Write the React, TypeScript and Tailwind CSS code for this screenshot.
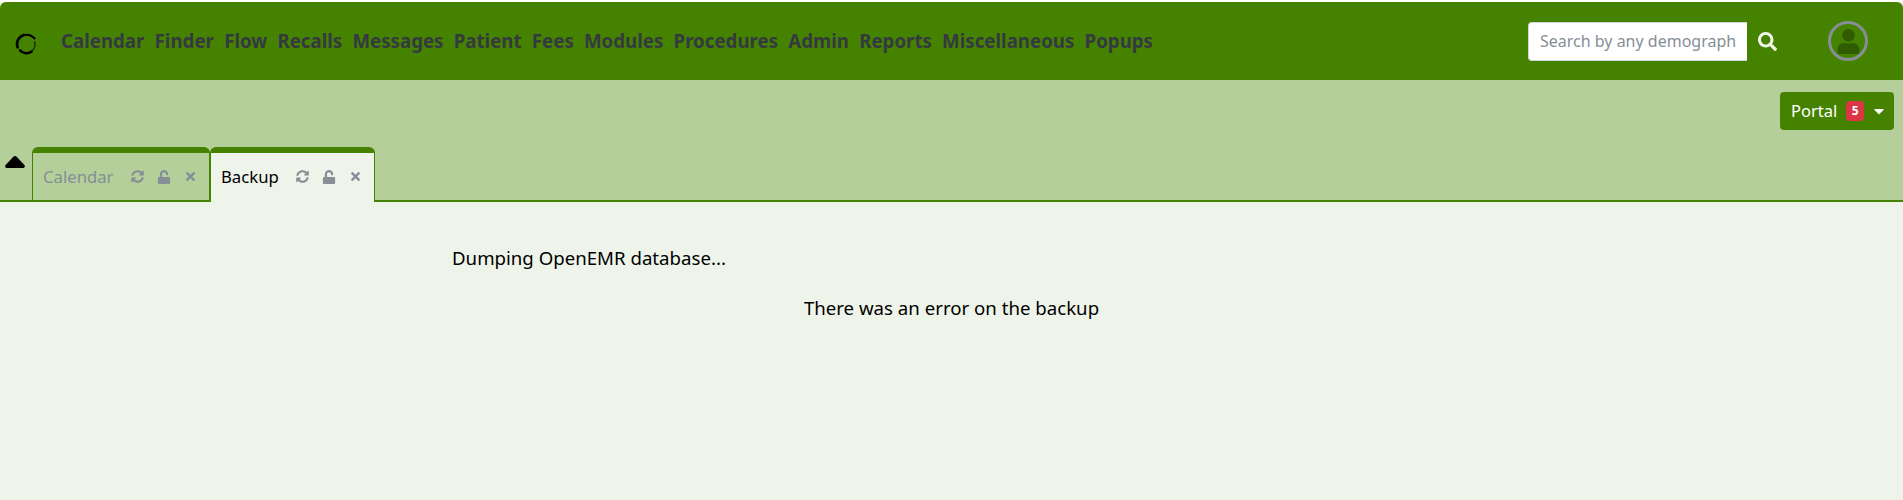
import React from 'react';
import { FaSyncAlt, FaUnlock, FaTimes, FaSearch, FaCaretDown, FaUser } from 'react-icons/fa';

const menus = ['Calendar', 'Finder', 'Flow', 'Recalls', 'Messages', 'Patient', 'Fees', 'Modules', 'Procedures', 'Admin', 'Reports', 'Miscellaneous', 'Popups'];

const TabIcons = ({ first }: { first: string }) => (
  <div className="flex items-center text-[#868e96]">
    <FaSyncAlt className={`${first} w-[13px] h-[13px]`} />
    <FaUnlock className="ml-[13px] w-[14px] h-[14px]" />
    <FaTimes className="ml-[13px] w-[13px] h-[13px]" />
  </div>
);

const Logo = () => (
  <svg width="22" height="22" viewBox="0 0 20 20" fill="none" stroke="black" strokeLinecap="round">
    <path d="M2.4 13C0.8 8.5 3 3.4 8 1.8" strokeWidth="2.4" />
    <path d="M8 1.8C11.5 1 15.4 2.2 17.8 5" strokeWidth="1.8" />
    <path d="M18 8C18.8 12 17.4 15.4 14.4 17" strokeWidth="0.9" />
    <path d="M4.6 15.8C7.4 18.8 11.6 19.2 15 17" strokeWidth="2.4" />
  </svg>
);

export default function App() {
  return (
    <div className="min-h-[500px] bg-[#eff4ea] text-black font-['Noto_Sans',sans-serif] text-[16px] overflow-hidden">
      {/* Top nav */}
      <div className="h-[2px] bg-white" />
      <nav className="h-[78px] bg-[#458200] rounded-t-[6px] flex items-center">
        <div className="ml-[15px] mt-[5px] w-[22px] h-[22px]">
          <Logo />
        </div>
        <div className="ml-[24px] flex items-center gap-[10.2px] font-bold text-[#343a40] text-[18.7px]">
          {menus.map((m) => (
            <span key={m}>{m}</span>
          ))}
        </div>
        <div className="ml-auto flex items-center">
          <input
            readOnly
            placeholder="Search by any demographics"
            className="w-[219px] h-[39px] bg-white rounded-l-[4px] border border-[#ced4da] border-r-0 pl-[11px] pr-[10px] text-[16px] placeholder:text-[#868e96] outline-none"
          />
          <FaSearch className="ml-[11px] w-[19px] h-[19px] text-[#f4f8ec]" />
          <div className="ml-[51px] mr-[35px] w-[40px] h-[40px] rounded-full border-[3px] border-[#868e96] flex items-center justify-center overflow-hidden">
            <FaUser className="w-[25px] h-[25px] text-[#2f5c00]" />
          </div>
        </div>
      </nav>

      {/* Tab bar */}
      <div className="h-[122px] bg-[#b5cf9a] border-b-2 border-[#458200] flex flex-col">
        <div className="flex justify-end pt-[12px] pr-[9px]">
          <button className="h-[38px] w-[114px] bg-[#458200] rounded-[4px] text-white flex items-center pl-[11px]">
            <span className="text-[16.5px]">Portal</span>
            <span className="ml-[9px] w-[18px] h-[20px] rounded-[4px] bg-[#dc3545] text-white text-[12px] font-bold flex items-center justify-center">5</span>
            <FaCaretDown className="ml-[7px] w-[16px] h-[16px]" />
          </button>
        </div>
        <div className="flex items-end h-[55px] mt-[15px]">
          <div className="w-[32px] self-start pl-[5px] pt-[11px]">
            <svg width="20" height="12" viewBox="0 0 20 12" fill="black">
              <path d="M8.6 0.6C9.4-0.2 10.6-0.2 11.4 0.6L19.4 9C20.4 10.2 19.6 12 18 12H2C0.4 12 -0.4 10.2 0.6 9Z" />
            </svg>
          </div>
          <div className="h-[55px] w-[178px] border-x border-[#458200] border-t-[6px] rounded-t-[6px] flex items-center pl-[10px] text-[#868e96] text-[16.7px] -mb-[2px] pb-[2px]">
            <span>Calendar</span>
            <TabIcons first="ml-[18px]" />
          </div>
          <div className="h-[55px] w-[165px] bg-[#eff4ea] border-x border-[#458200] border-t-[6px] rounded-t-[6px] flex items-center pl-[10px] text-[16.7px] -mb-[2px] pb-[2px]">
            <span>Backup</span>
            <TabIcons first="ml-[17px]" />
          </div>
        </div>
      </div>

      {/* Backup output */}
      <main className="text-[18.65px]">
        <div className="pt-[44px] pl-[452px] leading-[24px]">Dumping OpenEMR database...</div>
        <div className="pt-[26px] text-center leading-[24px]">There was an error on the backup</div>
      </main>
    </div>
  );
}
